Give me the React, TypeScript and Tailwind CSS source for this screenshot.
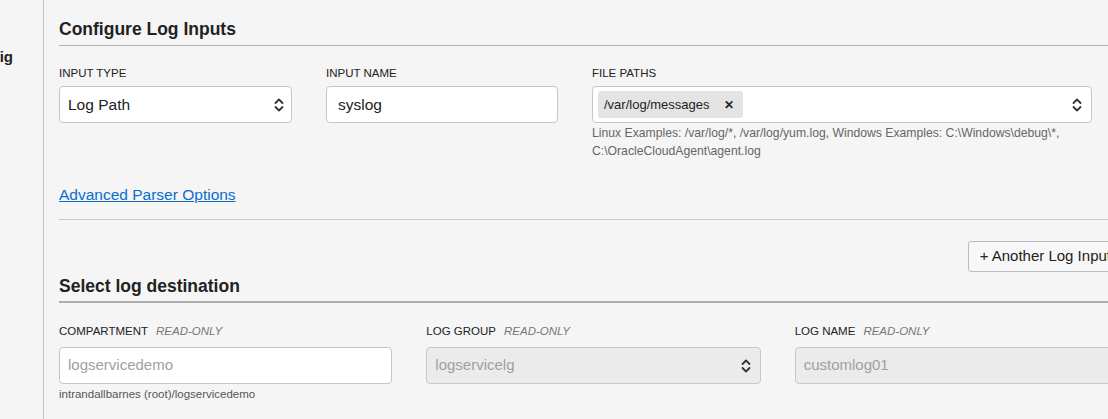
import React from "react";

function Chevrons({ className = "" }: { className?: string }) {
  return (
    <svg width="12" height="16" viewBox="0 0 12 16" className={className} fill="none">
      <path d="M2.5 6 L6 2.5 L9.5 6" stroke="#333" strokeWidth="1.8" strokeLinecap="round" strokeLinejoin="round" />
      <path d="M2.5 10 L6 13.5 L9.5 10" stroke="#333" strokeWidth="1.8" strokeLinecap="round" strokeLinejoin="round" />
    </svg>
  );
}

function Label({ text, readOnly, mb }: { text: string; readOnly?: boolean; mb: string }) {
  return (
    <div className={`text-[11.5px] leading-[14px] font-medium text-[#222] uppercase ${mb}`}>
      {text}
      {readOnly && <span className="ml-[8px] italic font-normal text-[#777]">READ-ONLY</span>}
    </div>
  );
}

export default function App() {
  return (
    <div
      className="w-[1108px] h-[419px] overflow-hidden bg-[#f5f5f5] flex text-[#222]"
      style={{ fontFamily: '"Liberation Sans", Arial, sans-serif' }}
    >
      {/* sidebar stub */}
      <div className="w-[44px] shrink-0 border-r border-[#c4c4c4]">
        <div className="w-[13px] overflow-hidden flex justify-end mt-[46px]">
          <span className="whitespace-nowrap text-[15px] leading-[22px] font-bold">Config</span>
        </div>
      </div>

      <div className="w-[1069px] shrink-0 ml-[15px] pt-[17px]">
        <h2 className="text-[17.5px] leading-[24px] font-bold pb-[4px] border-b border-[#b4b4b4]">
          Configure Log Inputs
        </h2>

        <div className="flex gap-[34px] mt-[20px]">
          <div className="w-[233px]">
            <Label text="Input Type" mb="mb-[6px]" />
            <div className="h-[37px] bg-white border border-[#c3c6ca] rounded-[4px] flex items-center justify-between pl-[8px] pr-[6px] text-[15.5px]">
              <span>Log Path</span>
              <Chevrons />
            </div>
          </div>
          <div className="w-[232px]">
            <Label text="Input Name" mb="mb-[6px]" />
            <div className="h-[37px] bg-white border border-[#c3c6ca] rounded-[4px] flex items-center pl-[11px] text-[15.5px]">
              syslog
            </div>
          </div>
          <div className="w-[500px]">
            <Label text="File Paths" mb="mb-[6px]" />
            <div className="h-[37px] bg-white border border-[#c3c6ca] rounded-[4px] flex items-center justify-between pl-[5px] pr-[8px]">
              <span className="h-[27px] flex items-center bg-[#e4e4e4] rounded-[3px] pl-[6px] pr-[9px] text-[13px]">
                /var/log/messages
                <span className="ml-[14px] text-[12px] font-bold">✕</span>
              </span>
              <Chevrons />
            </div>
            <p className="mt-[1px] text-[12.2px] leading-[18px] text-[#666]">
              Linux Examples: /var/log/*, /var/log/yum.log, Windows Examples: C:\Windows\debug\*,
              <br />
              C:\OracleCloudAgent\agent.log
            </p>
          </div>
        </div>

        <a href="#" className="block mt-[25px] text-[15.5px] leading-[20px] text-[#0a6dcc] underline w-fit">
          Advanced Parser Options
        </a>

        <div className="mt-[14px] border-t border-[#cacaca]" />

        <div className="flex justify-end mt-[21px] mr-[5px]">
          <button className="h-[31px] px-[11px] bg-[#f7f7f7] border border-[#b9bdc2] rounded-[3px] text-[15px] text-[#222] whitespace-nowrap">
            + Another Log Input
          </button>
        </div>

        <h2 className="mt-[2px] text-[17.5px] leading-[24px] font-bold pb-[3px] border-b-2 border-[#adadad]">
          Select log destination
        </h2>

        <div className="flex gap-[34px] mt-[21px]">
          <div className="w-[334px]">
            <Label text="Compartment" readOnly mb="mb-[9px]" />
            <div className="h-[37px] bg-white border border-[#c3c6ca] rounded-[4px] flex items-center pl-[8px] text-[15px] text-[#a0a0a0]">
              logservicedemo
            </div>
            <p className="mt-[1px] text-[11.5px] leading-[18px] text-[#555]">intrandallbarnes (root)/logservicedemo</p>
          </div>
          <div className="w-[335px]">
            <Label text="Log Group" readOnly mb="mb-[9px]" />
            <div className="h-[37px] bg-[#ebebeb] border border-[#c6c8cb] rounded-[4px] flex items-center justify-between pl-[8px] pr-[8px] text-[15px] text-[#a0a0a0]">
              <span>logservicelg</span>
              <Chevrons />
            </div>
          </div>
          <div className="w-[334px]">
            <Label text="Log Name" readOnly mb="mb-[9px]" />
            <div className="h-[37px] bg-[#ebebeb] border border-[#c6c8cb] rounded-[4px] flex items-center pl-[8px] text-[15px] text-[#a0a0a0]">
              customlog01
            </div>
          </div>
        </div>
      </div>
    </div>
  );
}
